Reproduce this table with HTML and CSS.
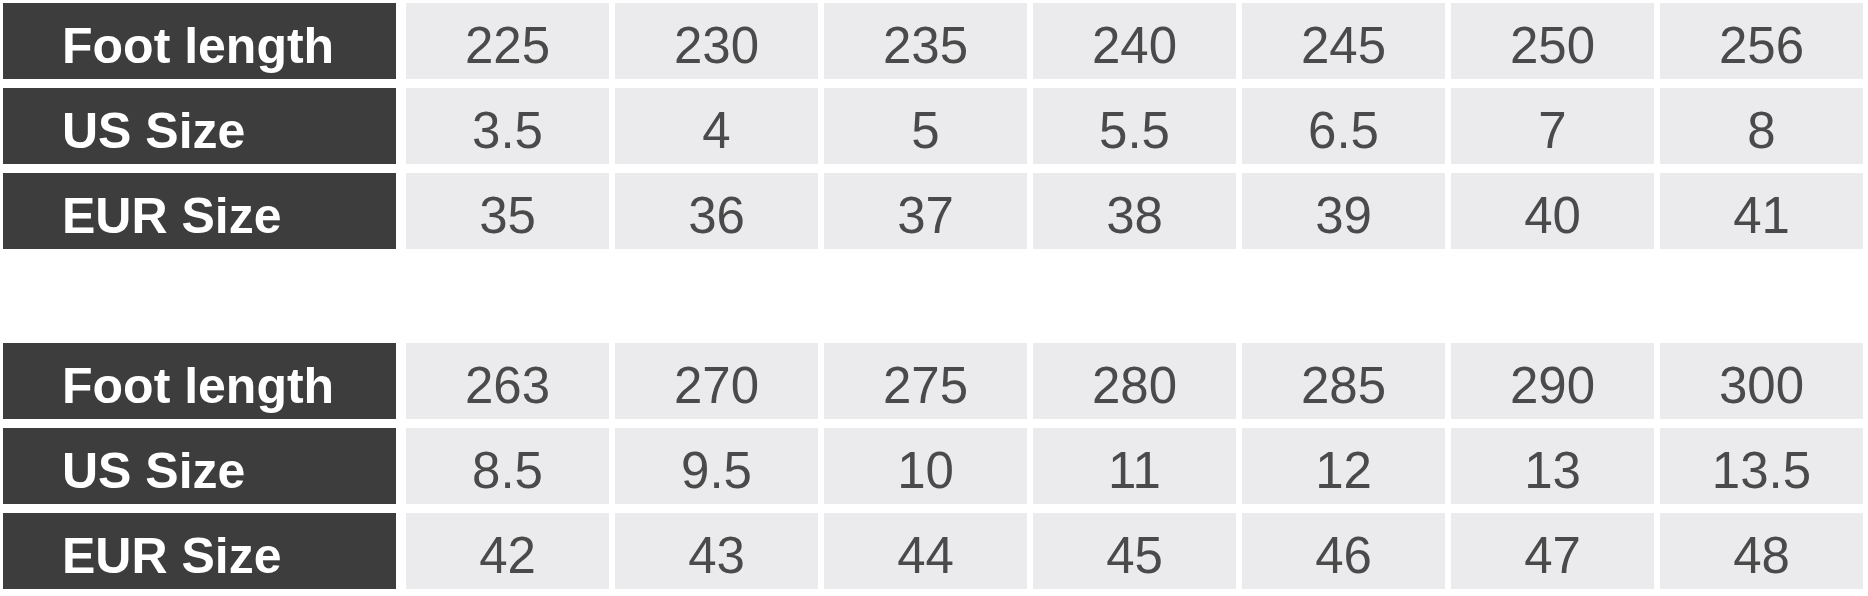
FILE: index.html
```html
<!DOCTYPE html>
<html lang="en">
<head>
<meta charset="utf-8">
<title>Size chart</title>
<link rel="stylesheet" href="styles.css">
</head>
<body>
<div class="page">
  <div class="chart">
    <div class="label">Foot length</div>
    <div class="cell">225</div><div class="cell">230</div><div class="cell">235</div><div class="cell">240</div><div class="cell">245</div><div class="cell">250</div><div class="cell">256</div>
    <div class="label">US Size</div>
    <div class="cell">3.5</div><div class="cell">4</div><div class="cell">5</div><div class="cell">5.5</div><div class="cell">6.5</div><div class="cell">7</div><div class="cell">8</div>
    <div class="label">EUR Size</div>
    <div class="cell">35</div><div class="cell">36</div><div class="cell">37</div><div class="cell">38</div><div class="cell">39</div><div class="cell">40</div><div class="cell">41</div>
  </div>
  <div class="chart">
    <div class="label">Foot length</div>
    <div class="cell">263</div><div class="cell">270</div><div class="cell">275</div><div class="cell">280</div><div class="cell">285</div><div class="cell">290</div><div class="cell">300</div>
    <div class="label">US Size</div>
    <div class="cell">8.5</div><div class="cell">9.5</div><div class="cell">10</div><div class="cell">11</div><div class="cell">12</div><div class="cell">13</div><div class="cell">13.5</div>
    <div class="label">EUR Size</div>
    <div class="cell">42</div><div class="cell">43</div><div class="cell">44</div><div class="cell">45</div><div class="cell">46</div><div class="cell">47</div><div class="cell">48</div>
  </div>
</div>
</body>
</html>
```
FILE: styles.css
```css
html, body {
  margin: 0;
  padding: 0;
  background: #ffffff;
}

.page {
  padding: 3px 0 0 3px;
  display: flex;
  flex-direction: column;
  gap: 94px;
  font-family: "Liberation Sans", Arial, sans-serif;
}

.chart {
  display: grid;
  grid-template-columns: 397px repeat(7, 203px);
  grid-auto-rows: 76px;
  column-gap: 6px;
  row-gap: 9px;
}

.label {
  width: calc(100% - 4px);
  box-sizing: border-box;
  background: #3d3d3d;
  color: #ffffff;
  font-weight: bold;
  font-size: 50px;
  display: flex;
  align-items: center;
  padding: 9px 0 0 59px;
  white-space: nowrap;
}

.cell {
  background: #ebebed;
  color: #4a4a4a;
  font-size: 51px;
  display: flex;
  align-items: center;
  justify-content: center;
  padding-top: 9px;
  box-sizing: border-box;
}
```
